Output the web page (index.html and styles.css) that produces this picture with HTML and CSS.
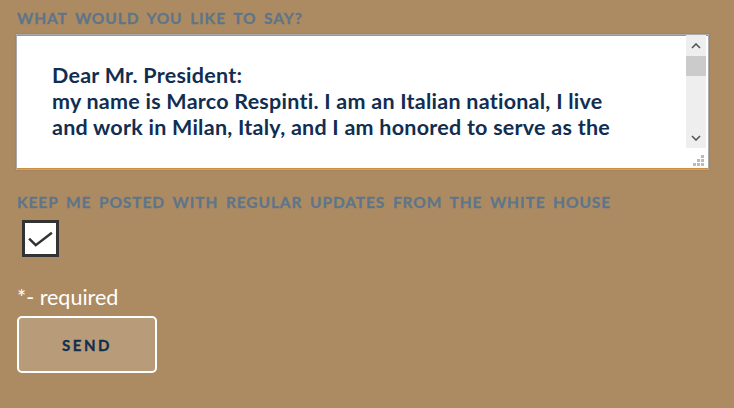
FILE: index.html
```html
<!DOCTYPE html>
<html lang="en">
<head>
  <meta charset="UTF-8" />
  <meta name="viewport" content="width=device-width, initial-scale=1.0"/>
  <title>Contact | The White House</title>
  <link rel="stylesheet" href="styles.css">
</head>
<body>
  <form class="contact-form">
    <label class="field-label" for="message">What would you like to say?</label>
    <div class="message-box">
      <div class="message-text" id="message" contenteditable="true">
        <div>Dear Mr. President:</div>
        <div>my name is Marco Respinti. I am an Italian national, I live</div>
        <div>and work in Milan, Italy, and I am honored to serve as the</div>
      </div>
      <div class="scrollbar">
        <span class="scroll-btn">
          <svg viewBox="0 0 10 6" width="10" height="6"><polyline points="1,5 5,1 9,5" fill="none" stroke="#555" stroke-width="1.6"/></svg>
        </span>
        <span class="scroll-thumb"></span>
        <span class="scroll-track"></span>
        <span class="scroll-btn">
          <svg viewBox="0 0 10 6" width="10" height="6"><polyline points="1,1 5,5 9,1" fill="none" stroke="#555" stroke-width="1.6"/></svg>
        </span>
      </div>
      <svg class="grip" viewBox="0 0 11 11" width="11" height="11" fill="#bbb">
        <rect x="8" y="0" width="3" height="3"/>
        <rect x="4" y="4" width="3" height="3"/><rect x="8" y="4" width="3" height="3"/>
        <rect x="0" y="8" width="3" height="3"/><rect x="4" y="8" width="3" height="3"/><rect x="8" y="8" width="3" height="3"/>
      </svg>
    </div>

    <div class="field-label updates-label">Keep me posted with regular updates from the White House</div>
    <label class="check">
      <input type="checkbox" checked>
      <span class="check-box">
        <svg viewBox="0 0 28 20" width="27" height="19"><polyline points="2,9 9,16 26,3" fill="none" stroke="#333" stroke-width="2.6"/></svg>
      </span>
    </label>

    <p class="required">*- required</p>
    <button type="button" class="send-btn">Send</button>
  </form>
</body>
</html>
```

FILE: styles.css
```css
:root {
  --bg: #ad8b62;
  --label: #5e7589;
  --navy: #112e51;
  --orange: #d28b3c;
}
* { box-sizing: border-box; }
body { margin: 0; background: var(--bg); font-family: 'Lato', 'Open Sans', sans-serif; }

.contact-form { display: flex; flex-direction: column; align-items: flex-start; padding: 8px 26px 0 17px; }

.field-label { color: var(--label); font-weight: 700; font-size: 15.5px; letter-spacing: 0.9px; word-spacing: 3px; text-transform: uppercase; line-height: 20px; -webkit-text-stroke: 0.3px var(--label); }

/* fake textarea */
.message-box {
  position: relative;
  display: flex;
  margin: 6px 0 0 -1px;
  width: 693px; height: 136px;
  background: #fff;
  border: 1px solid #aaa;
  box-shadow: inset 0 1px 0 var(--orange), inset 0 -1px 0 var(--orange), 0 0 2px rgba(0,0,0,0.15);
}
.message-text {
  flex: 1;
  overflow: hidden;
  white-space: nowrap;
  padding: 27px 0 0 35px;
  margin-bottom: 31px;
  font-weight: 700; font-size: 21.5px; letter-spacing: 0.25px; line-height: 26px; color: var(--navy);
  outline: none;
}
.scrollbar { display: flex; flex-direction: column; align-self: flex-start; width: 20px; height: 113px; margin-right: 2px; background: #eee; }
.scroll-btn { display: flex; align-items: center; justify-content: center; height: 21px; }
.scroll-thumb { height: 20px; background: #cbcbcb; }
.scroll-track { flex: 1; }
.grip { position: absolute; right: 4px; bottom: 3px; }

.updates-label { margin-top: 22px; }

.check { display: block; margin: 8px 0 0 5px; cursor: pointer; }
.check input { display: none; }
.check-box { display: flex; align-items: center; justify-content: center; width: 37px; height: 37px; padding-top: 2px; background: #fff; border: 3px solid #333; }

.required { margin: 28px 0 0; color: #fff; font-size: 21.5px; line-height: 24px; }

.send-btn {
  margin-top: 7px;
  width: 140px; height: 57px;
  background: #b89b78; color: var(--navy);
  border: 2px solid #fff; border-radius: 5px;
  font-family: inherit; font-weight: 700; font-size: 15px; letter-spacing: 2.6px; text-transform: uppercase;
  -webkit-text-stroke: 0.3px var(--navy);
  cursor: pointer;
}
```
